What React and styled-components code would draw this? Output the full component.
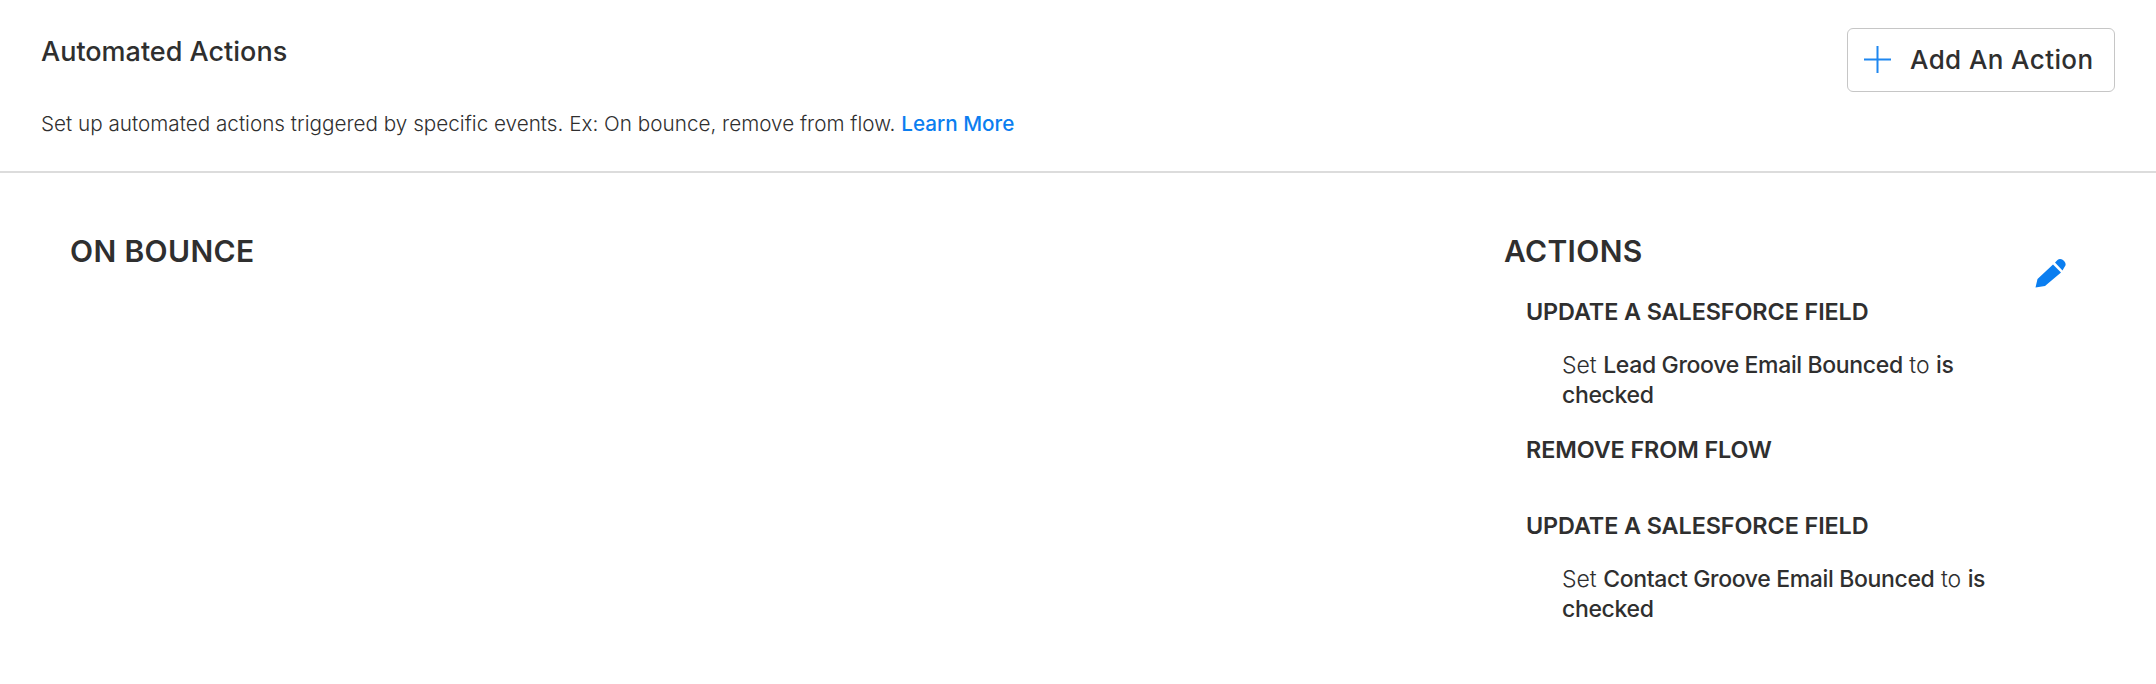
import React from "react"
import styled, { createGlobalStyle } from "styled-components"

const GlobalStyle = createGlobalStyle`
  html, body {
    margin: 0;
    padding: 0;
    background: #ffffff;
    font-family: Inter, "Liberation Sans", sans-serif;
    color: #2f2f2f;
  }
`

const Header = styled.header`
  box-sizing: border-box;
  display: flex;
  justify-content: space-between;
  align-items: flex-start;
  height: 173px;
  padding: 28px 41px 0;
  border-bottom: 2px solid #dcdcdc;
`

const Title = styled.h1`
  margin: 8px 0 0;
  font-size: 27px;
  line-height: 32px;
  font-weight: 500;
`

const Description = styled.p`
  margin: 42px 0 0;
  font-size: 20.7px;
  line-height: 28px;
  font-weight: 300;
`

const LearnMore = styled.a`
  color: #0b7ef0;
  font-weight: 500;
`

const AddButton = styled.button`
  display: flex;
  align-items: center;
  gap: 19px;
  width: 268px;
  height: 64px;
  padding: 0 0 2px 16px;
  background: #ffffff;
  border: 1px solid #c6c6c6;
  border-radius: 6px;
  color: #2f2f2f;
  font-family: inherit;
  font-size: 26px;
  font-weight: 500;
  letter-spacing: 0.4px;
`

const Body = styled.main`
  display: flex;
  justify-content: space-between;
  padding: 60px 0 0 70px;
`

const SectionHeading = styled.h2`
  margin: 0;
  font-size: 30px;
  line-height: 36px;
  font-weight: 600;
  letter-spacing: 0.35px;
`

const ActionsColumn = styled.section`
  position: relative;
  width: 652px;
`

const ActionList = styled.div`
  padding: 28px 0 0 22px;
`

const Action = styled.div`
  margin-bottom: ${props => props.$gap}px;
`

const ActionName = styled.h3`
  margin: 0;
  font-size: 23.4px;
  line-height: 30px;
  font-weight: 600;
  letter-spacing: -0.1px;
`

const ActionDetail = styled.p`
  width: 440px;
  margin: 0;
  padding: 23px 0 0 36px;
  font-size: 23px;
  line-height: 30px;
  font-weight: 300;

  b {
    font-weight: 550;
    letter-spacing: -0.35px;
  }
`

const EditIcon = styled.svg`
  position: absolute;
  top: 26px;
  right: 90px;
  width: 31px;
  height: 29px;
  fill: #0b7ef0;
`

const PlusIcon = () => (
  <svg width="27" height="27" viewBox="0 0 27 27" fill="none" stroke="#1f87f0" strokeWidth="2">
    <path d="M13.5 0v27M0 13.5h27" />
  </svg>
)

const actions = [
  { name: "UPDATE A SALESFORCE FIELD", field: "Lead Groove Email Bounced", gap: 25 },
  { name: "REMOVE FROM FLOW", gap: 46 },
  { name: "UPDATE A SALESFORCE FIELD", field: "Contact Groove Email Bounced", gap: 0 },
]

export default function App() {
  return (
    <>
      <GlobalStyle />
      <Header>
        <div>
          <Title>Automated Actions</Title>
          <Description>
            Set up automated actions triggered by specific events. Ex: On bounce, remove from flow.{" "}
            <LearnMore>Learn More</LearnMore>
          </Description>
        </div>
        <AddButton>
          <PlusIcon />
          Add An Action
        </AddButton>
      </Header>
      <Body>
        <SectionHeading>ON BOUNCE</SectionHeading>
        <ActionsColumn>
          <SectionHeading>ACTIONS</SectionHeading>
          <EditIcon viewBox="0 0 31 29">
            <path d="M0.5 28.5 L2.5 20 L18 5.5 L26 13.5 L10 27 Z M20 3.5 L22.5 1 C24 -0.2 26 -0.2 28 1 L29.5 2.5 C31 4.5 31 6.5 29.5 8 L27.5 11.5 Z" />
          </EditIcon>
          <ActionList>
            {actions.map((action, i) => (
              <Action key={i} $gap={action.gap}>
                <ActionName>{action.name}</ActionName>
                {action.field && (
                  <ActionDetail>
                    Set <b>{action.field}</b> to <b>is checked</b>
                  </ActionDetail>
                )}
              </Action>
            ))}
          </ActionList>
        </ActionsColumn>
      </Body>
    </>
  )
}
